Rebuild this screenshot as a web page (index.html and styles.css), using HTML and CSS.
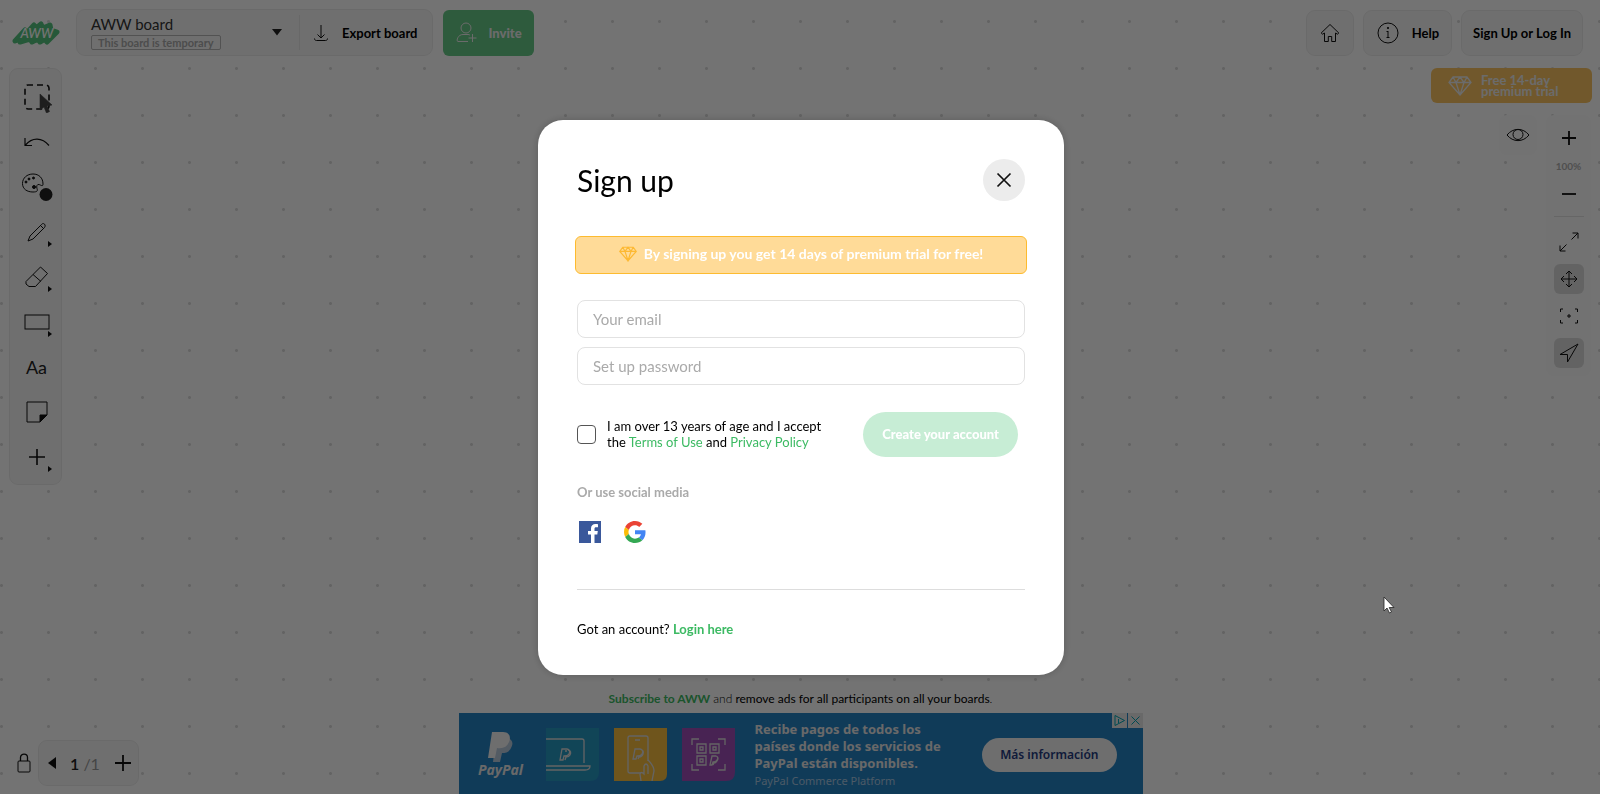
FILE: index.html
```
<!DOCTYPE html>
<html lang="en">
<head>
<meta charset="UTF-8">
<meta name="viewport" content="width=device-width, initial-scale=1">
<title>AWW board</title>
<link rel="stylesheet" href="styles.css">
</head>
<body>
<div class="app">
  <header class="header">
    <a href="#" class="logo" aria-label="AWW">
      <svg width="48" height="26" viewBox="0 0 48 26">
        <path d="M3 21 L13 10 L11 17 L22 5 L22 10 L29 4 L31 8 L38 5 L39 10 L45 12 L35 22 L33 19 L28 22 L26 19 L20 22 L18 19 L8 22 L10 18 Z" fill="#55c47e" stroke="#55c47e" stroke-width="5" stroke-linejoin="round"/>
        <text x="25" y="18" text-anchor="middle" class="logo-text">AWW</text>
      </svg>
    </a>
    <div class="panel board">
      <button class="board-name">
        <span class="board-info">
          <span class="board-title">AWW board</span>
          <span class="board-tag">This board is temporary</span>
        </span>
        <svg width="10" height="7" viewBox="0 0 10 7"><path d="M0 0h10L5 6.500z" fill="#222"/></svg>
      </button>
      <button class="export">
        <svg width="16" height="18" viewBox="0 0 16 18" class="line"><path d="M8 1v13M4.500 10.500L8 14l3.500-3.500M1.500 14.500c0 1.500 1 2 2 2h9c1 0 2-.5 2-2"/></svg>
        Export board
      </button>
    </div>
    <button class="invite">
      <svg width="22" height="22" viewBox="0 0 22 22" class="line light"><circle cx="10" cy="6" r="5"/><path d="M12 19.500H2c-2 0-.5-7 5-7h5c1 0 1.500.3 2 .7M12.500 16h8M16.500 12v8"/></svg>
      Invite
    </button>
    <div class="header-right">
      <button class="panel home" aria-label="Home">
        <svg width="20" height="20" viewBox="0 0 20 20" class="line"><path d="M10 1.500L1.200 10l1.400 1.200L4.500 10v8.500h3.800v-5h3.400v5h3.800V10l1.900 1.200 1.400-1.200z"/></svg>
      </button>
      <button class="panel help">
        <svg width="22" height="22" viewBox="0 0 22 22" class="line"><circle cx="11" cy="11" r="10"/><path d="M11 9v6M9.500 9.500h1.500M9.500 15.500h3" /><circle cx="11" cy="6" r=".7" fill="#000"/></svg>
        Help
      </button>
      <button class="panel login">Sign Up or Log In</button>
    </div>
  </header>

  <main class="main">
    <nav class="panel toolbar" aria-label="Tools">
      <button class="tool" aria-label="Select">
        <svg width="32" height="32" viewBox="0 0 32 32"><rect x="4" y="4" width="24" height="24" rx="3" fill="none" stroke="#111" stroke-width="1.600" stroke-dasharray="6 4" stroke-dashoffset="1"/><path d="M19 13v16l4-3 2.500 6 3-1.500L26 25l5-1z" fill="#444" stroke="#444" stroke-width=".6"/></svg>
      </button>
      <button class="tool" aria-label="Undo">
        <svg width="26" height="12" viewBox="0 0 26 12" class="line"><path d="M1 2v7.500h7M1.500 9C8 1 18 1 25 9.500" stroke-width="1.200"/></svg>
      </button>
      <button class="tool" aria-label="Color">
        <svg width="32" height="32" viewBox="0 0 32 32" class="line"><path d="M12 3C6 3 1.500 7 1.500 12.500S6 21 12 21c4 0 5-1 4-3.500-.8-2 0-4.500 2-4 2 .6 4 2.500 4-.5C22 7 18 3 12 3z"/><g fill="#111"><circle cx="5" cy="11" r="1"/><circle cx="8" cy="8" r="1"/><circle cx="12.500" cy="7" r="1"/><circle cx="13" cy="16" r="1.500"/></g><circle cx="25" cy="23.500" r="6.500" fill="#222" stroke="none"/></svg>
      </button>
      <button class="tool more" aria-label="Pencil">
        <svg width="20" height="20" viewBox="0 0 20 20" class="line"><path d="M1 19l2-5L14.500 2.500c2-2.500 5 .5 3 3L6 17zM13.500 3.500l3 3"/></svg>
      </button>
      <button class="tool more" aria-label="Eraser">
        <svg width="24" height="22" viewBox="0 0 24 22" class="line"><path d="M15.500 1l7 6.500-12 13H4L1 18v-2.500zM8 8.500l8 7"/></svg>
      </button>
      <button class="tool more" aria-label="Rectangle">
        <svg width="26" height="16" viewBox="0 0 26 16" class="line"><rect x="1" y="1" width="24" height="14"/></svg>
      </button>
      <button class="tool text-tool" aria-label="Text">Aa</button>
      <button class="tool" aria-label="Sticky note">
        <svg width="22" height="22" viewBox="0 0 22 22" class="line"><path d="M21 14V1H1v20h13"/><path d="M14 21v-7h7z" fill="#111"/></svg>
      </button>
      <button class="tool more" aria-label="Add">
        <svg width="18" height="18" viewBox="0 0 18 18" class="line"><path d="M9 1v16M1 9h16" stroke-width="1.600"/></svg>
      </button>
    </nav>

    <div class="side">
      <button class="trial">
        <svg width="24" height="20" viewBox="0 0 24 20" class="line light"><path d="M5 1h14l4 5.500L12 19 1 6.500zM1 6.500h22M5 1l3 5.500L12 1l4 5.500L19 1M8 6.500L12 19l4-12.500" stroke-width="1.300"/></svg>
        <span>Free 14-day<br>premium trial</span>
      </button>
      <div class="view">
        <button class="eye" aria-label="Preview">
          <svg width="24" height="14" viewBox="0 0 24 14" class="line"><path d="M1 7c6-7.500 16-7.500 22 0-6 7.500-16 7.500-22 0z"/><circle cx="12" cy="6.500" r="5"/></svg>
        </button>
        <div class="zoom">
          <button aria-label="Zoom in"><svg width="14" height="14" viewBox="0 0 14 14" class="line"><path d="M7 0v14M0 7h14" stroke-width="1.800"/></svg></button>
          <span class="zoom-value">100%</span>
          <button aria-label="Zoom out"><svg width="14" height="14" viewBox="0 0 14 14" class="line"><path d="M0 7h14" stroke-width="1.800"/></svg></button>
          <span class="zoom-line"></span>
          <button aria-label="Full screen"><svg width="20" height="20" viewBox="0 0 20 20" class="line"><path d="M12.500 7.500L19 1M13.500 1H19v5.500M7.500 12.500L1 19M1 13.500V19h5.500"/></svg></button>
          <button class="on" aria-label="Pan"><svg width="18" height="18" viewBox="0 0 18 18" class="line"><path d="M9 1v16M1 9h16M6 4l3-3 3 3M6 14l3 3 3-3M4 6L1 9l3 3M14 6l3 3-3 3"/></svg></button>
          <button aria-label="Fit"><svg width="20" height="16" viewBox="0 0 20 16" class="line"><path d="M4 1H1.500v3M16 1h2.500v3M4 15H1.500v-3M16 15h2.500v-3M10 6v4M8 8h4"/></svg></button>
          <button class="on" aria-label="Navigate"><svg width="20" height="20" viewBox="0 0 20 20" class="line"><path d="M19 1L1 11.500h7.500V19z"/></svg></button>
        </div>
      </div>
    </div>
  </main>

  <footer class="footer">
    <div class="pages">
      <svg width="14" height="20" viewBox="0 0 14 20" class="line"><rect x="1" y="8" width="12" height="11" rx="1"/><path d="M3.500 8V4.500c0-4.500 7-4.500 7 0V8" stroke-width="1.300"/></svg>
      <div class="panel pager">
        <button aria-label="Previous page"><svg width="8" height="12" viewBox="0 0 8 12"><path d="M8 0v12L0 6z" fill="#111"/></svg></button>
        <span class="page-count">1 <small>/1</small></span>
        <button aria-label="Add page"><svg width="18" height="18" viewBox="0 0 18 18" class="line"><path d="M9 1v16M1 9h16" stroke-width="1.800"/></svg></button>
      </div>
    </div>
    <div class="ads">
      <p class="ads-note"><a href="#">Subscribe to AWW</a> <span>and</span> remove ads for all participants on all your boards<span>.</span></p>
      <div class="ad">
        <div class="paypal">
          <svg width="26" height="30" viewBox="0 0 26 30"><path d="M8 6h11c5 1 7 5 4 10-2 4-5 5-9 5l-2 9H5z" fill="#b8c9dc"/><path d="M4 0h11c7 0 8 6 6 10-2 5-6 7-12 6l-2 10H0z" fill="#f4f4f4"/></svg>
          <span>PayPal</span>
        </div>
        <div class="tiles">
          <svg width="53" height="53" viewBox="0 0 53 53"><path d="M0 0h53v44q0 9-9 9H0z" fill="#2799c2"/><g class="ad-line"><path d="M0 11h36q2 0 2 2v22M0 38h44q0 4-5 4H0"/><path d="M16 21h5q4 1 2 5-1 2-5 2l-1 4h-3zM19 23h2M22 22q4 1 2 5-1 2-4 2l-1 3"/></g></svg>
          <svg width="53" height="53" viewBox="0 0 53 53"><path d="M0 0h53v46q0 7-7 7H0z" fill="#f5bd3f"/><g class="ad-line"><path d="M27 45H16q-2 0-2-2V10q0-2 2-2h16q2 0 2 2v23M21 12h5"/><path d="M21 21h5q4 1 2 5-1 2-5 2l-1 3h-3zM28 22q2 1 1 4-1 3-4 3l-1 2"/><path d="M27 53l-1-7q1-3 4 0V38q2-4 4 0v8M34 32q6 6 6 11l-2 10"/></g></svg>
          <svg width="53" height="53" viewBox="0 0 53 53"><path d="M0 0h53v44q0 9-9 9H0z" fill="#a04fb8"/><g class="ad-line"><path d="M10 17v-6h7M36 11h7v6M10 36v6h7M36 42h7v-6"/><path d="M15 16h9v9h-9zM28 16h9v9h-9zM15 28h9v9h-9zM18 19h3v3h-3zM31 19h3v3h-3zM18 31h3v3h-3z"/><path d="M30 28h4q3 1 1 4-1 2-4 2l-1 3h-2zM35 29q2 1 0 4-1 2-3 2l-1 2"/></g></svg>
        </div>
        <div class="ad-text">
          <strong>Recibe pagos de todos los<br>países donde los servicios de<br>PayPal están disponibles.</strong>
          <span>PayPal Commerce Platform</span>
        </div>
        <a href="#" class="ad-button">Más información</a>
        <div class="ad-choices">
          <svg width="15" height="15" viewBox="0 0 15 15"><path d="M3 2.500v10l9.500-5zM6.500 6v4" /></svg>
          <svg width="15" height="15" viewBox="0 0 15 15"><path d="M3.500 3.500l8 8M11.500 3.500l-8 8"/></svg>
        </div>
      </div>
    </div>
  </footer>
</div>

<div class="overlay">
  <form class="modal" role="dialog" aria-labelledby="modal-title">
    <div class="modal-head">
      <h1 id="modal-title">Sign up</h1>
      <button type="button" class="close" aria-label="Close">
        <svg width="16" height="16" viewBox="0 0 16 16" class="line"><path d="M1.500 1.500l13 13M14.500 1.500l-13 13" stroke-width="1.700"/></svg>
      </button>
    </div>
    <div class="banner">
      <svg width="18" height="16" viewBox="0 0 24 20"><path d="M5 1h14l4 5.500L12 19 1 6.500zM1 6.500h22M5 1l3 5.500L12 1l4 5.500L19 1M8 6.500L12 19l4-12.500" fill="none" stroke="#fdb933" stroke-width="1.600"/></svg>
      By signing up you get 14 days of premium trial for free!
    </div>
    <input class="field" type="email" placeholder="Your email" aria-label="Your email">
    <input class="field" type="password" placeholder="Set up password" aria-label="Set up password">
    <div class="accept">
      <input type="checkbox" id="accept">
      <label for="accept">I am over 13 years of age and I accept<br>the <a href="#">Terms of Use</a> and <a href="#">Privacy Policy</a></label>
      <button type="submit" class="create" disabled>Create your account</button>
    </div>
    <p class="social-title">Or use social media</p>
    <div class="social">
      <button type="button" aria-label="Facebook">
        <svg width="22" height="22" viewBox="0 0 22 22"><path d="M0 0h22v22H0z" fill="#3a589b"/><path d="M12 22v-8.500H9V10h3V7.500C12 4.500 13.800 3 16.500 3c1 0 2 .1 2.500.2v3h-1.800c-1.400 0-1.700.7-1.700 1.700V10h3.300l-.5 3.500h-2.800V22z" fill="#fff"/></svg>
      </button>
      <button type="button" aria-label="Google">
        <svg width="22" height="22" viewBox="0 0 48 48"><path fill="#EA4335" d="M24 9.500c3.540 0 6.710 1.220 9.210 3.600l6.850-6.850C35.900 2.380 30.470 0 24 0 14.620 0 6.510 5.380 2.560 13.220l7.980 6.190C12.430 13.720 17.740 9.500 24 9.500z"/><path fill="#4285F4" d="M46.980 24.550c0-1.570-.15-3.090-.38-4.550H24v9.020h12.940c-.58 2.960-2.260 5.480-4.780 7.180l7.730 6c4.510-4.180 7.090-10.360 7.090-17.650z"/><path fill="#FBBC05" d="M10.530 28.590c-.48-1.450-.76-2.990-.76-4.590s.27-3.140.76-4.590l-7.980-6.190C.92 16.460 0 20.120 0 24c0 3.880.92 7.540 2.560 10.780l7.970-6.190z"/><path fill="#34A853" d="M24 48c6.480 0 11.930-2.130 15.890-5.810l-7.730-6c-2.150 1.450-4.920 2.300-8.160 2.300-6.260 0-11.570-4.220-13.470-9.910l-7.980 6.190C6.510 42.620 14.620 48 24 48z"/></svg>
      </button>
    </div>
    <p class="have-account">Got an account? <a href="#">Login here</a></p>
  </form>
</div>

<svg class="pointer" width="12" height="18" viewBox="0 0 12 18"><path d="M1 1v14l3-3 2.500 5 2-1-2.300-4.500H11z" fill="#fff" stroke="#222" stroke-width=".8"/></svg>
</body>
</html>
```
FILE: styles.css
```
* {
  box-sizing: border-box;
}
body {
  margin: 0;
  font-family: Lato, "Liberation Sans", sans-serif;
  font-size: 13px;
  color: #000;
}
button {
  font: inherit;
  color: inherit;
  background: none;
  border: none;
  padding: 0;
  cursor: pointer;
}
svg {
  display: block;
  flex: none;
}
p {
  margin: 0;
}
a {
  color: #3cba63;
  text-decoration: none;
}
.line {
  fill: none;
  stroke: #111;
  stroke-width: 1;
}
.line.light {
  stroke: #eee;
}

/* Board behind the dialog */
.app {
  display: flex;
  flex-direction: column;
  height: 100vh;
  min-height: 640px;
  background: radial-gradient(circle at center, #dcdcdc 1px, transparent 2px) -22px -2px / 47px 47px #fff;
}
.panel {
  background: #f7f7f7;
  border: 1px solid #ececec;
  border-radius: 9px;
}
.header {
  display: flex;
  align-items: center;
  padding: 9px 17px 0 12px;
}
.logo {
  margin-right: 16px;
}
.logo-text {
  font-size: 13px;
  font-weight: 600;
  font-style: italic;
  fill: #fff;
}
.board {
  display: flex;
  align-items: center;
  height: 47px;
  margin-right: 10px;
}
.board-name {
  display: flex;
  align-items: center;
  justify-content: space-between;
  width: 223px;
  padding: 0 17px 0 14px;
  border-right: 1px solid #e6e6e6;
  text-align: left;
}
.board-info {
  display: flex;
  flex-direction: column;
  align-items: flex-start;
  gap: 2px;
}
.board-title {
  font-size: 15px;
  line-height: 18px;
  color: #333;
}
.board-tag {
  padding: 0 6px;
  border: 1px solid #b5b5b5;
  border-radius: 2px;
  font-size: 11px;
  font-weight: 700;
  line-height: 13px;
  color: #aaa;
}
.export {
  display: flex;
  align-items: center;
  gap: 13px;
  padding: 0 15px 0 13px;
  font-weight: 700;
}
.invite {
  display: flex;
  align-items: center;
  gap: 10px;
  height: 46px;
  padding: 0 12px 0 13px;
  border-radius: 6px;
  background: #66c987;
  color: #eee;
  font-weight: 900;
}
.header-right {
  display: flex;
  gap: 9px;
  margin-left: auto;
}
.header-right button {
  display: flex;
  align-items: center;
  height: 46px;
  font-weight: 700;
}
.home {
  padding: 0 13px;
}
.help {
  gap: 13px;
  padding: 0 12px 0 13px;
}
.login {
  padding: 0 11px;
}

.main {
  flex: 1;
  display: flex;
  justify-content: space-between;
  align-items: flex-start;
  padding: 12px 8px 0 9px;
}
.toolbar {
  display: flex;
  flex-direction: column;
  width: 53px;
  padding: 5px 0 5px 2px;
}
.tool {
  position: relative;
  display: flex;
  align-items: center;
  justify-content: center;
  height: 45px;
}
.more::after {
  content: "";
  position: absolute;
  right: 9px;
  bottom: 7px;
  border: 3px solid transparent;
  border-left: 4px solid #111;
  border-right: none;
}
.text-tool {
  font-size: 18px;
  color: #222;
}
.side {
  display: flex;
  flex-direction: column;
  align-items: flex-end;
  gap: 12px;
}
.trial {
  display: flex;
  align-items: center;
  gap: 9px;
  width: 161px;
  height: 35px;
  padding: 0 17px;
  border-radius: 6px;
  background: #fac463;
  color: #eee;
  font-weight: 700;
  line-height: 11px;
  text-align: left;
}
.view {
  display: flex;
  align-items: flex-start;
  gap: 9px;
  padding-right: 1px;
}
.eye {
  display: flex;
  align-items: center;
  justify-content: center;
  width: 38px;
  height: 40px;
  border-radius: 8px;
  background: #fcfcfc;
}
.zoom {
  display: flex;
  flex-direction: column;
  align-items: center;
  gap: 7px;
  width: 45px;
  padding: 8px 0;
  border-radius: 8px;
  background: #fcfcfc;
}
.zoom button {
  display: flex;
  align-items: center;
  justify-content: center;
  width: 30px;
  height: 30px;
  border-radius: 6px;
}
.zoom .on {
  background: #dcdcdc;
}
.zoom-value {
  font-size: 10px;
  font-weight: 700;
  line-height: 12px;
  color: #b0b0b0;
}
.zoom-line {
  width: 30px;
  height: 1px;
  margin-bottom: 3px;
  background: #e2e2e2;
}

.footer {
  display: grid;
  grid-template-columns: 1fr 684px 1fr;
  align-items: end;
  padding-left: 1px;
}
.pages {
  display: flex;
  align-items: center;
  gap: 7px;
  padding: 0 0 8px 16px;
}
.pager {
  display: flex;
  align-items: center;
  justify-content: space-between;
  width: 101px;
  height: 46px;
  padding: 0 6px 0 9px;
}
.page-count {
  font-size: 16px;
  font-weight: 600;
  color: #222;
}
.page-count small {
  font-size: 16px;
  font-weight: 400;
  color: #999;
}
.ads-note {
  margin-bottom: 5px;
  font-size: 12px;
  line-height: 18px;
  text-align: center;
}
.ads-note a {
  font-weight: 700;
}
.ads-note span {
  font-weight: 300;
}
.ad {
  position: relative;
  display: flex;
  align-items: center;
  height: 81px;
  padding: 2px 26px 0 19px;
  background: #2583c4;
  color: #e8e8e8;
  font-family: "Noto Sans", sans-serif;
}
.paypal {
  display: flex;
  flex-direction: column;
  align-items: center;
  width: 46px;
  margin-right: 22px;
  font-size: 14px;
  font-weight: 700;
  font-style: italic;
  line-height: 16px;
}
.tiles {
  display: flex;
  gap: 15px;
  margin-right: 20px;
}
.ad-line {
  fill: none;
  stroke: #ddd;
  stroke-width: 1.3;
}
.ad-text {
  display: flex;
  flex-direction: column;
  font-size: 13px;
  line-height: 17px;
}
.ad-text span {
  font-size: 11px;
  color: #a8c8e2;
}
.ad-button {
  margin-left: auto;
  padding: 0 18px;
  border-radius: 17px;
  background: #f4f4f4;
  color: #253b80;
  font-size: 12px;
  font-weight: 600;
  line-height: 34px;
}
.ad-choices {
  position: absolute;
  top: 0;
  right: 0;
  display: flex;
  gap: 1px;
}
.ad-choices svg {
  background: #e8e8e8;
  fill: none;
  stroke: #00a5b5;
}

/* Sign up dialog */
.overlay {
  position: fixed;
  inset: 0;
  display: flex;
  align-items: center;
  justify-content: center;
  padding-left: 2px;
  background: rgba(0, 0, 0, .55);
}
.modal {
  width: 526px;
  max-width: 100%;
  padding: 39px 39px 37px;
  border-radius: 25px;
  background: #fff;
  box-shadow: 0 0 8px rgba(0, 0, 0, .2);
}
.modal-head {
  display: flex;
  align-items: center;
  justify-content: space-between;
  margin-bottom: 35px;
}
h1 {
  margin: 0;
  font-size: 30px;
  font-weight: 400;
}
.close {
  display: flex;
  align-items: center;
  justify-content: center;
  width: 42px;
  height: 42px;
  border-radius: 50%;
  background: #ececec;
}
.banner {
  display: flex;
  align-items: center;
  justify-content: center;
  gap: 7px;
  height: 38px;
  margin: 0 -2px 26px;
  padding-bottom: 2px;
  border: 1px solid #fdbb2f;
  border-radius: 6px;
  background: #ffdb98;
  color: #fff;
  font-size: 14px;
  font-weight: 700;
}
.field {
  display: block;
  width: 100%;
  height: 38px;
  margin-bottom: 9px;
  padding: 0 15px;
  border: 1px solid #e2e2e2;
  border-radius: 8px;
  font: inherit;
  font-size: 15px;
}
.field::placeholder {
  color: #aaa;
}
.accept {
  display: flex;
  align-items: center;
  margin: 27px 7px 26px 0;
  line-height: 16px;
}
.accept input {
  appearance: none;
  width: 19px;
  height: 19px;
  margin: 0 11px 0 0;
  border: 1px solid #555;
  border-radius: 4px;
}
.accept input:checked {
  background: #3cba63;
}
.create {
  height: 45px;
  margin-left: auto;
  padding: 0 19px;
  border-radius: 23px;
  background: #c7edd5;
  color: #fff;
  font-weight: 900;
}
.social-title {
  margin-bottom: 20px;
  font-weight: 700;
  line-height: 18px;
  color: #aaa;
}
.social {
  display: flex;
  gap: 23px;
  padding: 0 2px 46px;
  border-bottom: 1px solid #ddd;
}
.have-account {
  margin-top: 30px;
  line-height: 18px;
}
.have-account a {
  font-weight: 700;
}

.pointer {
  position: fixed;
  left: 1383px;
  top: 596px;
  pointer-events: none;
}
```
